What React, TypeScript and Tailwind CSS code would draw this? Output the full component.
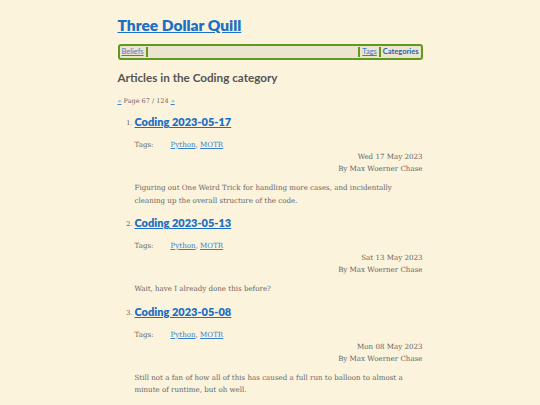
import React from "react";

type Article = {
  title: string;
  date: string;
  summary: string;
};

const ARTICLES: Article[] = [
  {
    title: "Coding 2023-05-17",
    date: "Wed 17 May 2023",
    summary:
      "Figuring out One Weird Trick for handling more cases, and incidentally cleaning up the overall structure of the code.",
  },
  {
    title: "Coding 2023-05-13",
    date: "Sat 13 May 2023",
    summary: "Wait, have I already done this before?",
  },
  {
    title: "Coding 2023-05-08",
    date: "Mon 08 May 2023",
    summary:
      "Still not a fan of how all of this has caused a full run to balloon to almost a minute of runtime, but oh well.",
  },
];

const heading = "font-['Lato',sans-serif]";
const body = "font-['DejaVu_Serif',serif]";
const link = "text-[#3a7fc8] underline";

function ArticleItem({ article, n }: { article: Article; n: number }) {
  return (
    <li className="flex">
      <span className={`${body} w-[17px] shrink-0 text-right pr-[2px] text-[6.5px] pt-[6px] text-[#555]`}>
        {n}.
      </span>
      <div className="flex-1">
        <h2 className={`${heading} text-[11px] font-extrabold leading-[18px] underline text-[#1c6fc4]`}>
          {article.title}
        </h2>
        <div className={`${body} text-[7.1px] text-[#666] mt-[8px] flex leading-[12px]`}>
          <span className="w-[36px]">Tags:</span>
          <span>
            <a className={link}>Python</a>, <a className={link}>MOTR</a>
          </span>
        </div>
        <div className={`${body} text-[7.1px] text-[#666] text-right leading-[12px]`}>
          <div>{article.date}</div>
          <div>By Max Woerner Chase</div>
        </div>
        <p className={`${body} text-[7.1px] text-[#666] leading-[12.5px] mt-[7px] pr-[18px]`}>
          {article.summary}
        </p>
      </div>
    </li>
  );
}

export default function App() {
  return (
    <div className="min-h-[405px] w-full bg-[#fcf3dc] overflow-hidden">
      <div className="w-[305px] mx-auto pt-[14px]">
        <h1 className={`${heading} text-[15.5px] font-extrabold leading-[22px] text-[#1c6fc4] underline`}>
          Three Dollar Quill
        </h1>

        {/* nav bar */}
        <nav
          className={`${heading} mt-[8px] h-[16px] flex items-center rounded-[3px] border-2 border-[#5e9a1e] bg-[#ece4cf] text-[7.5px] px-[2px]`}
        >
          <a className={`${link} pr-[2px]`}>Beliefs</a>
          <span className="w-[2px] h-[10px] bg-[#5e9a1e]" />
          <span className="flex-1" />
          <span className="w-[2px] h-[10px] bg-[#5e9a1e]" />
          <a className={`${link} px-[2px]`}>Tags</a>
          <span className="w-[2px] h-[10px] bg-[#5e9a1e]" />
          <a className="text-[#1f65b0] font-bold pl-[2px]">Categories</a>
        </nav>

        <h2 className={`${heading} mt-[8px] text-[11.7px] font-bold leading-[18px] text-[#555]`}>
          Articles in the Coding category
        </h2>

        <p className={`${body} mt-[10px] text-[6.5px] text-[#666] leading-[10px]`}>
          <a className={link}>«</a> Page 67 / 124 <a className={link}>»</a>
        </p>

        <ol className="mt-[7px] flex flex-col gap-[7px]">
          {ARTICLES.map((a, i) => (
            <ArticleItem key={a.title} article={a} n={i + 1} />
          ))}
        </ol>
      </div>
    </div>
  );
}
